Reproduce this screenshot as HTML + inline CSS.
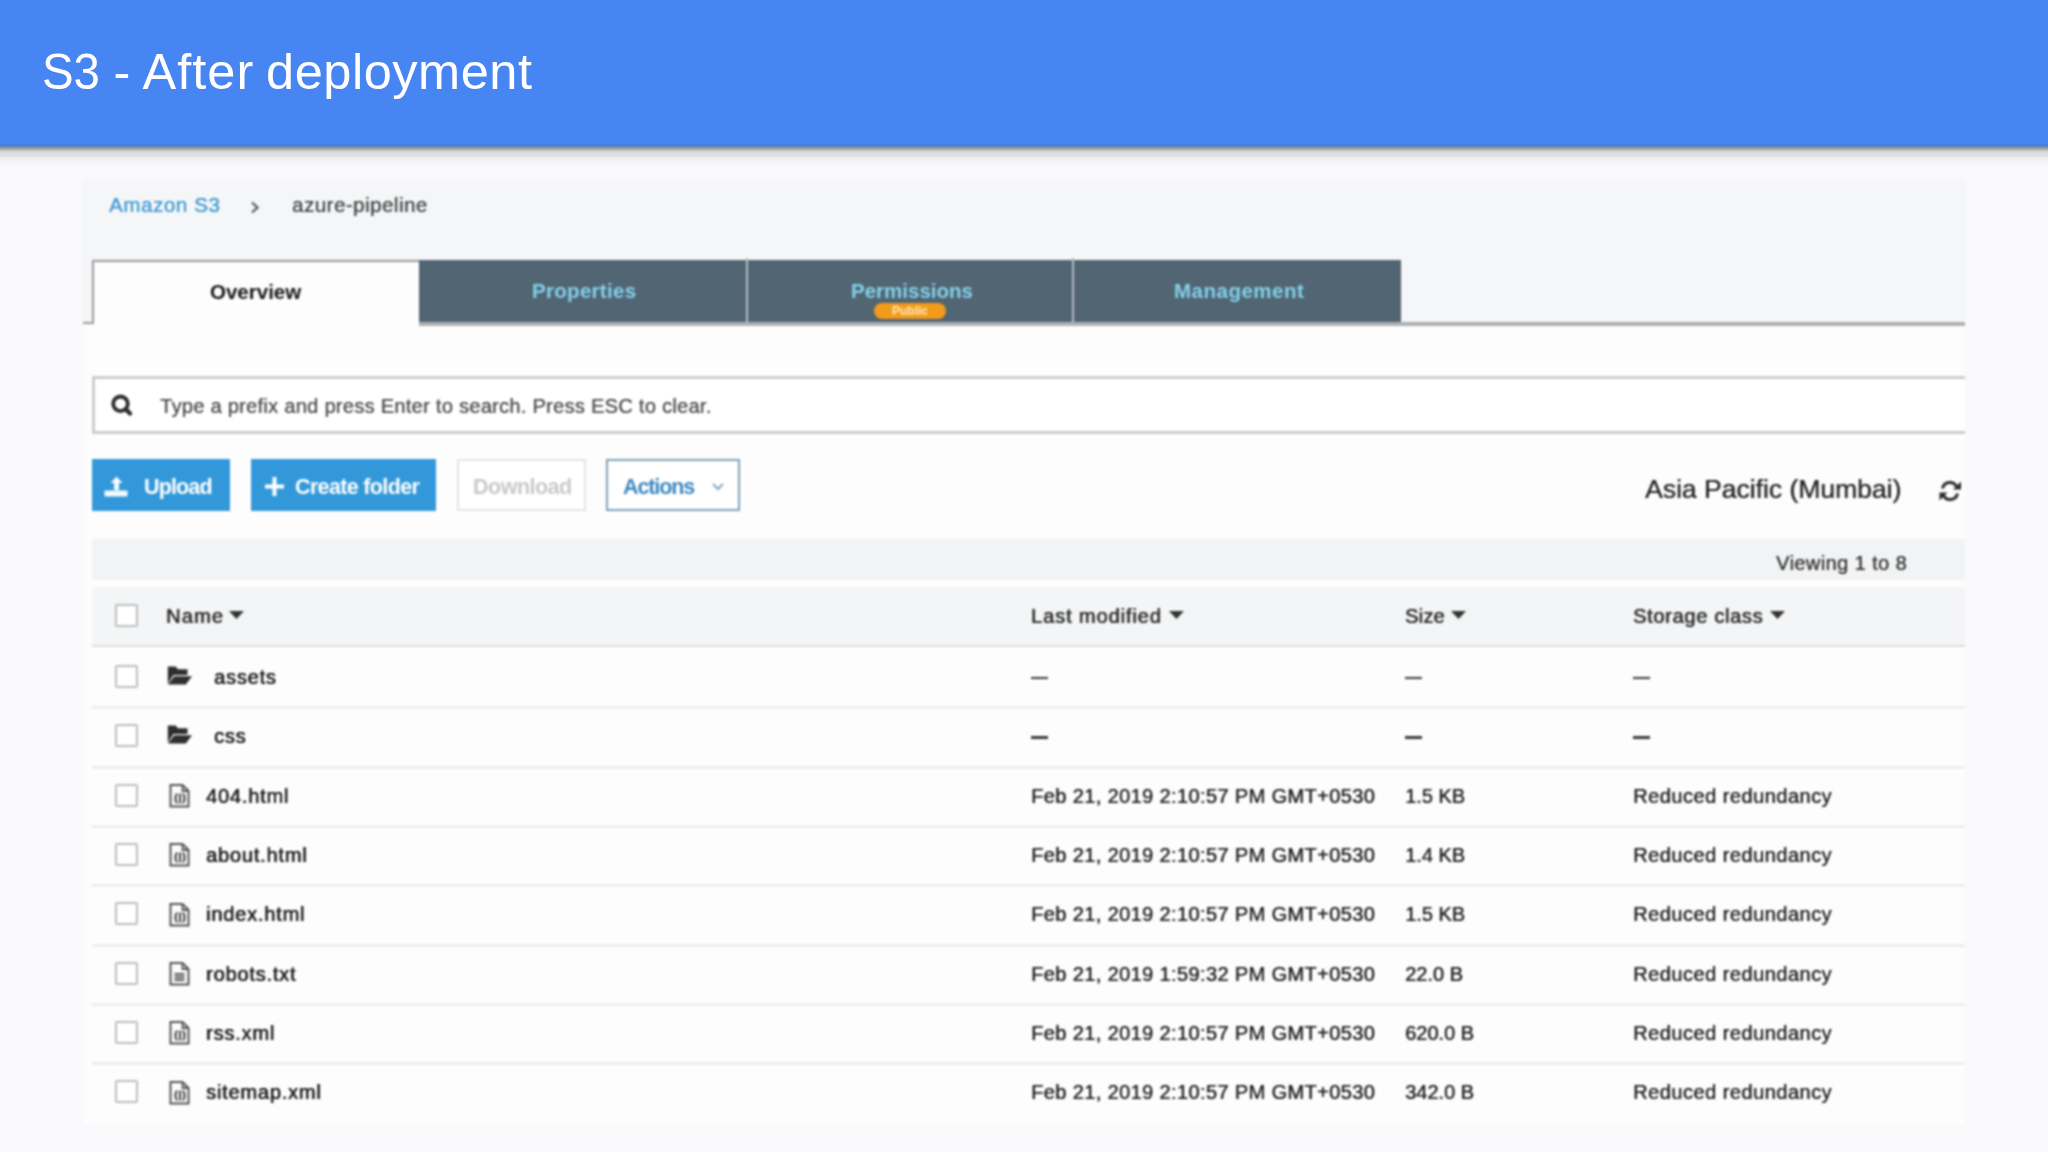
<!DOCTYPE html>
<html><head><meta charset="utf-8">
<style>
html,body{margin:0;padding:0;}
body{width:2048px;height:1152px;position:relative;overflow:hidden;background:#faf9fb;font-family:"Liberation Sans",sans-serif;}
.a{position:absolute;white-space:nowrap;}
.t{line-height:1;}
#hdr{left:0;top:0;width:2048px;height:146px;background:#4785f2;}
#shadow{left:0;top:144px;width:2048px;height:24px;background:linear-gradient(#4580e8 0px,#5b7fbc 2px,#a4ab9f 5px,#d0d0d0 7px,#dddcdf 9px,#e2e1e4 12px,#eeedf0 14px,#f6f5f8 19px,#faf9fb 24px);}
#wrap{left:0;top:0;width:2048px;height:1152px;filter:blur(0.8px);}
#shot{left:83px;top:180px;width:1882px;height:944px;background:#fdfdfe;}
#shotTop{left:83px;top:180px;width:1882px;height:143px;background:#f4f6f7;}
#tabline{left:419px;top:322px;width:1546px;height:4px;background:#adb1b3;}
#hook{left:83px;top:322px;width:11px;height:2px;background:#9a9a9a;}
#tabov{left:92px;top:260px;width:327px;height:64px;background:#fdfdfe;border-left:2px solid #9a9a9a;border-top:2px solid #9a9a9a;box-sizing:border-box;}
#tabdark{left:419px;top:260px;width:982px;height:62px;background:#526573;}
.sep{top:258px;width:2px;height:65px;background:#b3bfc6;}
#badge{left:874px;top:302.5px;width:72px;height:16.5px;border-radius:8px;background:#f19a1c;color:#ffe9b8;font-size:12px;line-height:16.5px;text-align:center;font-weight:bold;}
#search{left:92px;top:376px;width:1873px;height:58px;border:3px solid #cdcbce;border-right:none;box-sizing:border-box;background:#fff;}
.btn{top:459px;height:52px;background:#3398d9;}
#dl{left:457px;top:459px;width:129px;height:52px;border:2px solid #e4e4e4;box-sizing:border-box;background:#fff;}
#act{left:606px;top:459px;width:134px;height:52px;border:2px solid #7e9fb6;box-sizing:border-box;background:#fff;}
#vbar{left:92px;top:539px;width:1873px;height:41px;background:#f2f3f4;}
#thead{left:92px;top:587px;width:1873px;height:60px;background:#f4f5f6;border-bottom:2px solid #dcdcdc;box-sizing:border-box;}
.cb{left:115px;width:23px;height:23px;border:2px solid #bdbdbd;border-radius:2px;box-sizing:border-box;background:#fff;}
.dash{width:16.5px;height:2.6px;background:#3a3a3a;}
.rsep{left:92px;width:1873px;height:3px;background:#eeeef0;}
</style></head>
<body>
<div class="a" id="hdr"></div>
<div class="a" id="shadow"></div>
<div class="a t" style="left:42.3px;top:46.8px;font-size:50.5px;color:#fff;font-weight:normal;transform:scaleX(0.938);transform-origin:0 0;">S3</div>
<div class="a t" style="left:113.4px;top:46.8px;font-size:50.5px;color:#fff;font-weight:normal;">-</div>
<div class="a t" style="left:142.6px;top:46.8px;font-size:50.5px;color:#fff;font-weight:normal;letter-spacing:1px;">After</div>
<div class="a t" style="left:266.0px;top:46.8px;font-size:50.5px;color:#fff;font-weight:normal;letter-spacing:0.55px;">deployment</div>
<div class="a" id="wrap">
<div class="a" id="shot"></div>
<div class="a" id="shotTop"></div>
<div class="a t" style="left:109.0px;top:194.9px;font-size:20.5px;color:#3f98d4;font-weight:normal;text-shadow:0.3px 0 0 #3f98d4;letter-spacing:0.6px;">Amazon S3</div>
<svg class="a" style="left:249px;top:201px" width="12" height="13" viewBox="0 0 12 13"><path d="M3 1.5 L8.5 6.5 L3 11.5" fill="none" stroke="#555" stroke-width="2.2"/></svg>
<div class="a t" style="left:292.0px;top:195.2px;font-size:20.5px;color:#444;font-weight:normal;text-shadow:0.25px 0 0 #444;letter-spacing:0.5px;">azure-pipeline</div>
<div class="a" id="tabline"></div>
<div class="a" id="hook"></div>
<div class="a" id="tabov"></div>
<div class="a" id="tabdark"></div>
<div class="a sep" style="left:746px"></div><div class="a sep" style="left:1072px"></div>
<div class="a t" style="left:210.0px;top:282.2px;font-size:20.5px;color:#141414;font-weight:bold;">Overview</div>
<div class="a t" style="left:532.0px;top:281.4px;font-size:20.5px;color:#84d2ec;font-weight:bold;letter-spacing:0.3px;">Properties</div>
<div class="a t" style="left:851.0px;top:281.1px;font-size:20.5px;color:#84d2ec;font-weight:bold;">Permissions</div>
<div class="a t" style="left:1174.0px;top:281.4px;font-size:20.5px;color:#84d2ec;font-weight:bold;letter-spacing:0.5px;">Management</div>
<div class="a" id="badge">Public</div>
<div class="a" id="search"></div>
<svg class="a" style="left:110px;top:394px" width="24" height="24" viewBox="0 0 24 24"><circle cx="10.5" cy="9.8" r="7.3" fill="none" stroke="#2a2a2a" stroke-width="3.8"/><line x1="16" y1="15.5" x2="20" y2="19.5" stroke="#2a2a2a" stroke-width="4.4" stroke-linecap="round"/></svg>
<div class="a t" style="left:160.0px;top:395.8px;font-size:20px;color:#4d4d4d;font-weight:normal;text-shadow:0.25px 0 0 #4d4d4d;letter-spacing:0.3px;">Type a prefix and press Enter to search. Press ESC to clear.</div>
<div class="a btn" style="left:92px;width:138px;"></div>
<div class="a btn" style="left:251px;width:185px;"></div>
<div class="a" id="dl"></div>
<div class="a" id="act"></div>
<svg class="a" style="left:104px;top:476px" width="24" height="22" viewBox="0 0 24 22"><path d="M12.5 0.5 L6.5 7 H10 V14 H15 V7 H18.5 Z" fill="#f2fbff"/><rect x="0.5" y="14.5" width="23" height="6" fill="#f2fbff"/></svg>
<div class="a t" style="left:144.0px;top:476.6px;font-size:21.5px;color:#fff;font-weight:bold;letter-spacing:-0.85px;">Upload</div>
<svg class="a" style="left:265px;top:477px" width="19" height="19" viewBox="0 0 19 19"><rect x="7.5" y="0" width="4" height="19" fill="#fff"/><rect x="0" y="7.5" width="19" height="4" fill="#fff"/></svg>
<div class="a t" style="left:295.0px;top:476.6px;font-size:21.5px;color:#fff;font-weight:bold;letter-spacing:-0.65px;">Create folder</div>
<div class="a t" style="left:473.0px;top:476.6px;font-size:21.5px;color:#c9c9c9;font-weight:bold;letter-spacing:-0.5px;">Download</div>
<div class="a t" style="left:623.0px;top:476.6px;font-size:21.5px;color:#3b88c2;font-weight:bold;letter-spacing:-1.1px;">Actions</div>
<svg class="a" style="left:711px;top:482px" width="14" height="10" viewBox="0 0 14 10"><path d="M2 2 L7 7 L12 2" fill="none" stroke="#86a6bd" stroke-width="2"/></svg>
<div class="a t" style="left:1645.0px;top:475.9px;font-size:26.5px;color:#262626;font-weight:normal;text-shadow:0.3px 0 0 #262626;">Asia Pacific (Mumbai)</div>
<svg class="a" style="left:1938px;top:480px" width="24" height="22" viewBox="0 0 24 22"><path d="M4.5 8.5 A7.5 7.5 0 0 1 18.5 6.5" fill="none" stroke="#2a2a2a" stroke-width="3"/><path d="M19.5 13.5 A7.5 7.5 0 0 1 5.5 15.5" fill="none" stroke="#2a2a2a" stroke-width="3"/><path d="M15 9.5 H23 V1.5 Z" fill="#2a2a2a"/><path d="M1.5 12.5 H9.5 L1.5 20.5 Z" fill="#2a2a2a"/></svg>
<div class="a" id="vbar"></div>
<div class="a t" style="left:1776.0px;top:552.6px;font-size:20px;color:#333;font-weight:normal;text-shadow:0.25px 0 0 #333;letter-spacing:0.42px;">Viewing 1 to 8</div>
<div class="a" id="thead"></div>
<div class="a cb" style="top:604px"></div>
<div class="a t" style="left:166.0px;top:605.5px;font-size:20px;color:#2e2e2e;font-weight:normal;text-shadow:0.45px 0 0 #2e2e2e,0 0.2px 0 #2e2e2e;letter-spacing:1.2px;">Name</div>
<svg class="a" style="left:229px;top:611px" width="15" height="9" viewBox="0 0 15 9"><path d="M0 0 H15 L7.5 8 Z" fill="#333"/></svg>
<div class="a t" style="left:1031.0px;top:605.5px;font-size:20px;color:#2e2e2e;font-weight:normal;text-shadow:0.45px 0 0 #2e2e2e,0 0.2px 0 #2e2e2e;letter-spacing:0.9px;">Last modified</div>
<svg class="a" style="left:1169px;top:611px" width="15" height="9" viewBox="0 0 15 9"><path d="M0 0 H15 L7.5 8 Z" fill="#333"/></svg>
<div class="a t" style="left:1405.0px;top:605.5px;font-size:20px;color:#2e2e2e;font-weight:normal;text-shadow:0.45px 0 0 #2e2e2e,0 0.2px 0 #2e2e2e;letter-spacing:0.2px;">Size</div>
<svg class="a" style="left:1451px;top:611px" width="15" height="9" viewBox="0 0 15 9"><path d="M0 0 H15 L7.5 8 Z" fill="#333"/></svg>
<div class="a t" style="left:1633.0px;top:605.5px;font-size:20px;color:#2e2e2e;font-weight:normal;text-shadow:0.45px 0 0 #2e2e2e,0 0.2px 0 #2e2e2e;letter-spacing:0.7px;">Storage class</div>
<svg class="a" style="left:1770px;top:611px" width="15" height="9" viewBox="0 0 15 9"><path d="M0 0 H15 L7.5 8 Z" fill="#333"/></svg>
<div class="a rsep" style="top:706.3px"></div>
<div class="a cb" style="top:665px"></div>
<svg class="a" style="left:167px;top:666.0px" width="26" height="20" viewBox="0 0 26 20"><path d="M0.8 0.5 H8.5 L11 3.3 H20.5 V9 H6.5 L0.8 17.5 Z" fill="#2e2e30"/><path d="M7.3 10.3 H25 L18.8 18.6 H0.8 Z" fill="#2e2e30"/></svg>
<div class="a t" style="left:214.0px;top:667.1px;font-size:20px;color:#1c1c1c;font-weight:normal;text-shadow:0.45px 0 0 #1c1c1c,0 0.2px 0 #1c1c1c;letter-spacing:0.8px;">assets</div>
<div class="a dash" style="left:1031px;top:676.7px"></div>
<div class="a dash" style="left:1405px;top:676.7px"></div>
<div class="a dash" style="left:1633px;top:676.7px"></div>
<div class="a rsep" style="top:765.6px"></div>
<div class="a cb" style="top:724px"></div>
<svg class="a" style="left:167px;top:725.3px" width="26" height="20" viewBox="0 0 26 20"><path d="M0.8 0.5 H8.5 L11 3.3 H20.5 V9 H6.5 L0.8 17.5 Z" fill="#2e2e30"/><path d="M7.3 10.3 H25 L18.8 18.6 H0.8 Z" fill="#2e2e30"/></svg>
<div class="a t" style="left:214.0px;top:726.4px;font-size:20px;color:#1c1c1c;font-weight:normal;text-shadow:0.45px 0 0 #1c1c1c,0 0.2px 0 #1c1c1c;letter-spacing:0.8px;">css</div>
<div class="a dash" style="left:1031px;top:736.0px"></div>
<div class="a dash" style="left:1405px;top:736.0px"></div>
<div class="a dash" style="left:1633px;top:736.0px"></div>
<div class="a rsep" style="top:824.9px"></div>
<div class="a cb" style="top:784px"></div>
<svg class="a" style="left:169px;top:784.1px" width="22" height="24" viewBox="0 0 22 24"><path d="M1.5 1 H13.5 L19.5 7 V22.5 H1.5 Z" fill="none" stroke="#555" stroke-width="2"/><path d="M13.5 1 V7 H19.5" fill="none" stroke="#555" stroke-width="1.8"/><path d="M8 9.5 Q5 14.5 8 19.5" fill="none" stroke="#444" stroke-width="2"/><path d="M11 9.5 V19.5" stroke="#444" stroke-width="2"/><path d="M14 9.5 Q17 14.5 14 19.5" fill="none" stroke="#444" stroke-width="2"/></svg>
<div class="a t" style="left:206.0px;top:785.7px;font-size:20px;color:#1c1c1c;font-weight:normal;text-shadow:0.45px 0 0 #1c1c1c,0 0.2px 0 #1c1c1c;letter-spacing:0.8px;">404.html</div>
<div class="a t" style="left:1031.0px;top:785.7px;font-size:20px;color:#1f1f1f;font-weight:normal;text-shadow:0.4px 0 0 #1f1f1f;letter-spacing:0.38px;">Feb 21, 2019 2:10:57 PM GMT+0530</div>
<div class="a t" style="left:1405.0px;top:785.7px;font-size:20px;color:#1f1f1f;font-weight:normal;text-shadow:0.4px 0 0 #1f1f1f;">1.5 KB</div>
<div class="a t" style="left:1633.0px;top:785.7px;font-size:20px;color:#1f1f1f;font-weight:normal;text-shadow:0.4px 0 0 #1f1f1f;letter-spacing:0.49px;">Reduced redundancy</div>
<div class="a rsep" style="top:884.2px"></div>
<div class="a cb" style="top:843px"></div>
<svg class="a" style="left:169px;top:843.4px" width="22" height="24" viewBox="0 0 22 24"><path d="M1.5 1 H13.5 L19.5 7 V22.5 H1.5 Z" fill="none" stroke="#555" stroke-width="2"/><path d="M13.5 1 V7 H19.5" fill="none" stroke="#555" stroke-width="1.8"/><path d="M8 9.5 Q5 14.5 8 19.5" fill="none" stroke="#444" stroke-width="2"/><path d="M11 9.5 V19.5" stroke="#444" stroke-width="2"/><path d="M14 9.5 Q17 14.5 14 19.5" fill="none" stroke="#444" stroke-width="2"/></svg>
<div class="a t" style="left:206.0px;top:845.0px;font-size:20px;color:#1c1c1c;font-weight:normal;text-shadow:0.45px 0 0 #1c1c1c,0 0.2px 0 #1c1c1c;letter-spacing:0.8px;">about.html</div>
<div class="a t" style="left:1031.0px;top:845.0px;font-size:20px;color:#1f1f1f;font-weight:normal;text-shadow:0.4px 0 0 #1f1f1f;letter-spacing:0.38px;">Feb 21, 2019 2:10:57 PM GMT+0530</div>
<div class="a t" style="left:1405.0px;top:845.0px;font-size:20px;color:#1f1f1f;font-weight:normal;text-shadow:0.4px 0 0 #1f1f1f;">1.4 KB</div>
<div class="a t" style="left:1633.0px;top:845.0px;font-size:20px;color:#1f1f1f;font-weight:normal;text-shadow:0.4px 0 0 #1f1f1f;letter-spacing:0.49px;">Reduced redundancy</div>
<div class="a rsep" style="top:943.5px"></div>
<div class="a cb" style="top:902px"></div>
<svg class="a" style="left:169px;top:902.7px" width="22" height="24" viewBox="0 0 22 24"><path d="M1.5 1 H13.5 L19.5 7 V22.5 H1.5 Z" fill="none" stroke="#555" stroke-width="2"/><path d="M13.5 1 V7 H19.5" fill="none" stroke="#555" stroke-width="1.8"/><path d="M8 9.5 Q5 14.5 8 19.5" fill="none" stroke="#444" stroke-width="2"/><path d="M11 9.5 V19.5" stroke="#444" stroke-width="2"/><path d="M14 9.5 Q17 14.5 14 19.5" fill="none" stroke="#444" stroke-width="2"/></svg>
<div class="a t" style="left:206.0px;top:904.3px;font-size:20px;color:#1c1c1c;font-weight:normal;text-shadow:0.45px 0 0 #1c1c1c,0 0.2px 0 #1c1c1c;letter-spacing:0.8px;">index.html</div>
<div class="a t" style="left:1031.0px;top:904.3px;font-size:20px;color:#1f1f1f;font-weight:normal;text-shadow:0.4px 0 0 #1f1f1f;letter-spacing:0.38px;">Feb 21, 2019 2:10:57 PM GMT+0530</div>
<div class="a t" style="left:1405.0px;top:904.3px;font-size:20px;color:#1f1f1f;font-weight:normal;text-shadow:0.4px 0 0 #1f1f1f;">1.5 KB</div>
<div class="a t" style="left:1633.0px;top:904.3px;font-size:20px;color:#1f1f1f;font-weight:normal;text-shadow:0.4px 0 0 #1f1f1f;letter-spacing:0.49px;">Reduced redundancy</div>
<div class="a rsep" style="top:1002.8px"></div>
<div class="a cb" style="top:962px"></div>
<svg class="a" style="left:169px;top:962.0px" width="22" height="24" viewBox="0 0 22 24"><path d="M1.5 1 H13.5 L19.5 7 V22.5 H1.5 Z" fill="none" stroke="#555" stroke-width="2"/><path d="M13.5 1 V7 H19.5" fill="none" stroke="#555" stroke-width="1.8"/><path d="M5.5 12 H15.5 M5.5 15 H15.5 M5.5 18 H15.5" stroke="#555" stroke-width="2"/></svg>
<div class="a t" style="left:206.0px;top:963.6px;font-size:20px;color:#1c1c1c;font-weight:normal;text-shadow:0.45px 0 0 #1c1c1c,0 0.2px 0 #1c1c1c;letter-spacing:0.8px;">robots.txt</div>
<div class="a t" style="left:1031.0px;top:963.6px;font-size:20px;color:#1f1f1f;font-weight:normal;text-shadow:0.4px 0 0 #1f1f1f;letter-spacing:0.38px;">Feb 21, 2019 1:59:32 PM GMT+0530</div>
<div class="a t" style="left:1405.0px;top:963.6px;font-size:20px;color:#1f1f1f;font-weight:normal;text-shadow:0.4px 0 0 #1f1f1f;">22.0 B</div>
<div class="a t" style="left:1633.0px;top:963.6px;font-size:20px;color:#1f1f1f;font-weight:normal;text-shadow:0.4px 0 0 #1f1f1f;letter-spacing:0.49px;">Reduced redundancy</div>
<div class="a rsep" style="top:1062.1px"></div>
<div class="a cb" style="top:1021px"></div>
<svg class="a" style="left:169px;top:1021.3px" width="22" height="24" viewBox="0 0 22 24"><path d="M1.5 1 H13.5 L19.5 7 V22.5 H1.5 Z" fill="none" stroke="#555" stroke-width="2"/><path d="M13.5 1 V7 H19.5" fill="none" stroke="#555" stroke-width="1.8"/><path d="M8 9.5 Q5 14.5 8 19.5" fill="none" stroke="#444" stroke-width="2"/><path d="M11 9.5 V19.5" stroke="#444" stroke-width="2"/><path d="M14 9.5 Q17 14.5 14 19.5" fill="none" stroke="#444" stroke-width="2"/></svg>
<div class="a t" style="left:206.0px;top:1022.9px;font-size:20px;color:#1c1c1c;font-weight:normal;text-shadow:0.45px 0 0 #1c1c1c,0 0.2px 0 #1c1c1c;letter-spacing:0.8px;">rss.xml</div>
<div class="a t" style="left:1031.0px;top:1022.9px;font-size:20px;color:#1f1f1f;font-weight:normal;text-shadow:0.4px 0 0 #1f1f1f;letter-spacing:0.38px;">Feb 21, 2019 2:10:57 PM GMT+0530</div>
<div class="a t" style="left:1405.0px;top:1022.9px;font-size:20px;color:#1f1f1f;font-weight:normal;text-shadow:0.4px 0 0 #1f1f1f;">620.0 B</div>
<div class="a t" style="left:1633.0px;top:1022.9px;font-size:20px;color:#1f1f1f;font-weight:normal;text-shadow:0.4px 0 0 #1f1f1f;letter-spacing:0.49px;">Reduced redundancy</div>
<div class="a cb" style="top:1080px"></div>
<svg class="a" style="left:169px;top:1080.6px" width="22" height="24" viewBox="0 0 22 24"><path d="M1.5 1 H13.5 L19.5 7 V22.5 H1.5 Z" fill="none" stroke="#555" stroke-width="2"/><path d="M13.5 1 V7 H19.5" fill="none" stroke="#555" stroke-width="1.8"/><path d="M8 9.5 Q5 14.5 8 19.5" fill="none" stroke="#444" stroke-width="2"/><path d="M11 9.5 V19.5" stroke="#444" stroke-width="2"/><path d="M14 9.5 Q17 14.5 14 19.5" fill="none" stroke="#444" stroke-width="2"/></svg>
<div class="a t" style="left:206.0px;top:1082.2px;font-size:20px;color:#1c1c1c;font-weight:normal;text-shadow:0.45px 0 0 #1c1c1c,0 0.2px 0 #1c1c1c;letter-spacing:0.8px;">sitemap.xml</div>
<div class="a t" style="left:1031.0px;top:1082.2px;font-size:20px;color:#1f1f1f;font-weight:normal;text-shadow:0.4px 0 0 #1f1f1f;letter-spacing:0.38px;">Feb 21, 2019 2:10:57 PM GMT+0530</div>
<div class="a t" style="left:1405.0px;top:1082.2px;font-size:20px;color:#1f1f1f;font-weight:normal;text-shadow:0.4px 0 0 #1f1f1f;">342.0 B</div>
<div class="a t" style="left:1633.0px;top:1082.2px;font-size:20px;color:#1f1f1f;font-weight:normal;text-shadow:0.4px 0 0 #1f1f1f;letter-spacing:0.49px;">Reduced redundancy</div>
</div>
</body></html>
